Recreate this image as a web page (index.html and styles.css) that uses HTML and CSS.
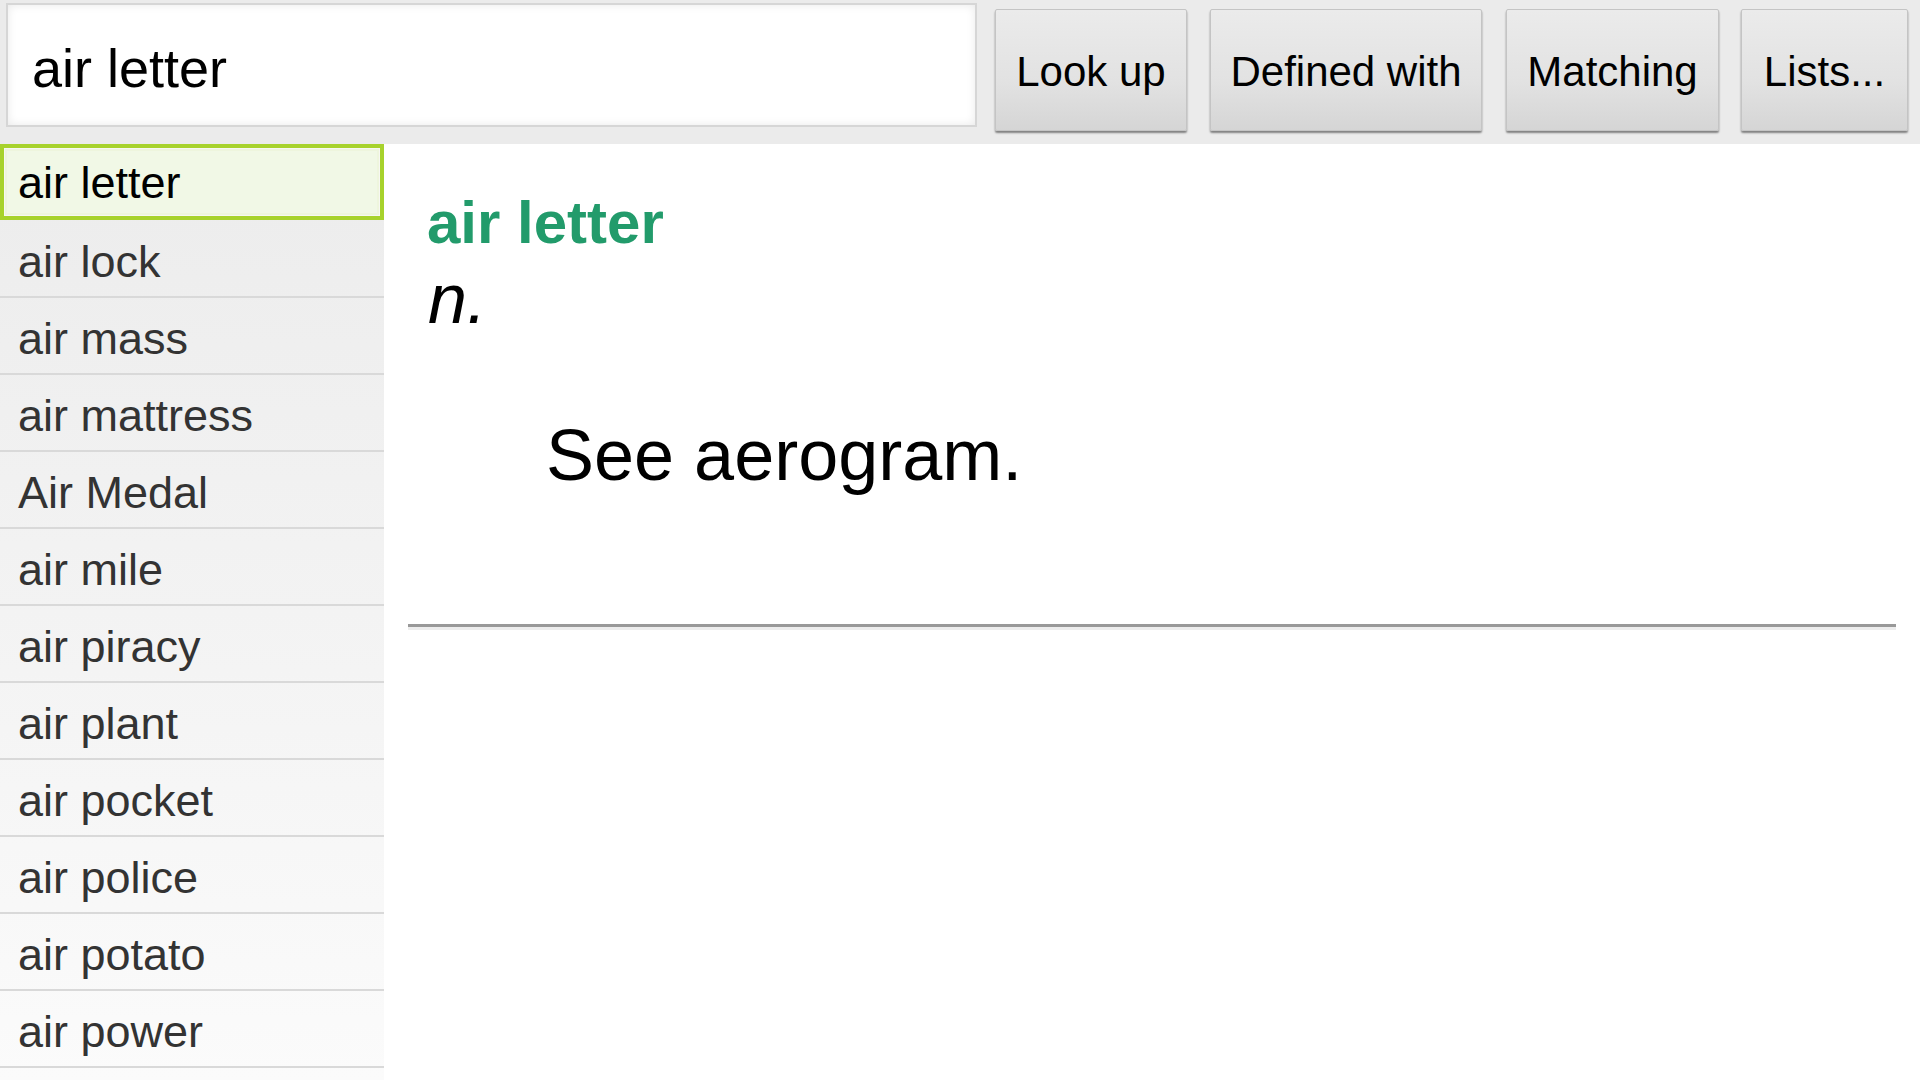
FILE: index.html
```html
<!DOCTYPE html>
<html>
<head>
<meta charset="utf-8">
<link rel="stylesheet" href="styles.css">
</head>
<body>
<div class="app">
  <div class="topbar">
    <div class="search"><input class="search-input" type="text" value="air letter"></div>
    <button class="btn btn-lookup">Look up</button>
    <button class="btn btn-defined">Defined with</button>
    <button class="btn btn-matching">Matching</button>
    <button class="btn btn-lists">Lists...</button>
  </div>
  <div class="body">
    <ul class="wordlist">
      <li class="word selected">air letter</li>
      <li class="word">air lock</li>
      <li class="word">air mass</li>
      <li class="word">air mattress</li>
      <li class="word">Air Medal</li>
      <li class="word">air mile</li>
      <li class="word">air piracy</li>
      <li class="word">air plant</li>
      <li class="word">air pocket</li>
      <li class="word">air police</li>
      <li class="word">air potato</li>
      <li class="word">air power</li>
    </ul>
    <div class="entry">
      <h1 class="headword">air letter</h1>
      <div class="pos">n.</div>
      <div class="definition">See aerogram.</div>
      <div class="rule"></div>
    </div>
  </div>
</div>
</body>
</html>
```

FILE: styles.css
```css
html, body {
  margin: 0;
  padding: 0;
  width: 1920px;
  height: 1080px;
  overflow: hidden;
  background: #ffffff;
  font-family: "Liberation Sans", Arial, Helvetica, sans-serif;
}

.app {
  display: flex;
  flex-direction: column;
  height: 1080px;
}

.topbar {
  display: flex;
  align-items: flex-start;
  height: 144px;
  background: #ebebeb;
  box-sizing: border-box;
  flex: none;
}

.search {
  margin: 3px 0 0 6px;
  width: 971px;
  height: 124px;
  box-sizing: border-box;
  border: 2px solid #d6d6d6;
  background: #ffffff;
  box-shadow: inset 0 0 10px rgba(0, 0, 0, 0.09);
  display: flex;
}

.search-input {
  flex: 1;
  border: none;
  outline: none;
  background: transparent;
  font-family: "Liberation Sans", Arial, Helvetica, sans-serif;
  font-size: 54px;
  color: #000;
  padding: 6px 0 0 24px;
  margin: 0;
}

.btn {
  margin-top: 9px;
  height: 122px;
  box-sizing: border-box;
  border: 1px solid #c4c4c4;
  border-radius: 2px;
  background: linear-gradient(to bottom, #ebebeb 0%, #e2e2e2 60%, #d5d5d5 100%);
  box-shadow: 0 2px 2px rgba(0, 0, 0, 0.45);
  font-family: "Liberation Sans", Arial, Helvetica, sans-serif;
  font-size: 42px;
  color: #000;
  padding: 4px 0 0 0;
  text-align: center;
  flex: none;
}

.btn-lookup { margin-left: 18px; width: 192px; }
.btn-defined { margin-left: 23px; width: 272px; }
.btn-matching { margin-left: 24px; width: 213px; }
.btn-lists { margin-left: 22px; width: 167px; }

.body {
  display: flex;
  flex: 1;
  min-height: 0;
}

.wordlist {
  list-style: none;
  margin: 0;
  padding: 0;
  width: 384px;
  flex: none;
  background: linear-gradient(to bottom, #ececec 0%, #f3f3f3 50%, #fbfbfb 100%);
}

.word {
  height: 77px;
  box-sizing: border-box;
  border-bottom: 2px solid #d9d9d9;
  font-size: 45px;
  line-height: 75px;
  padding: 3px 0 0 18px;
  color: #333333;
  white-space: nowrap;
}

.word.selected {
  border: 4px solid #a7d22c;
  background: #f1f8e6;
  box-shadow: inset 0 0 0 1px #f7f7f2, inset 0 0 0 3px #eef5dd;
  color: #000000;
  height: 76px;
  line-height: 68px;
  padding: 1px 0 0 14px;
  margin-bottom: 1px;
}

.entry {
  flex: 1;
  background: #ffffff;
  padding: 44px 24px 0 24px;
}

.headword {
  margin: 0 0 1px 19px;
  font-size: 60px;
  line-height: 70px;
  font-weight: bold;
  color: #229b6b;
}

.pos {
  margin-left: 20px;
  font-size: 70px;
  line-height: 80px;
  font-style: italic;
  color: #000;
}

.definition {
  margin: 74px 0 0 138px;
  font-size: 72px;
  line-height: 84px;
  color: #000;
}

.rule {
  margin-top: 127px;
  height: 3px;
  background: #999999;
  border-bottom: 3px solid #ededed;
}
```
